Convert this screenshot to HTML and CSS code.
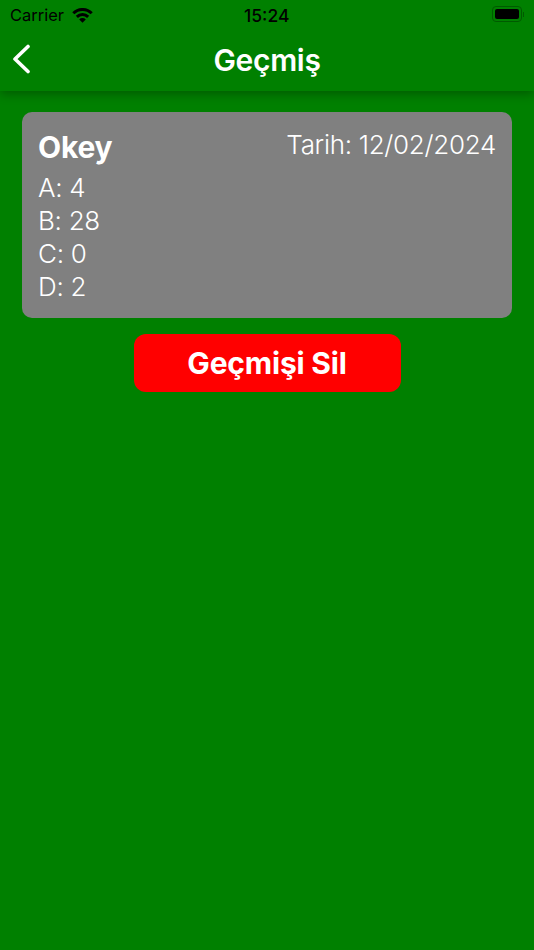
FILE: index.html
```html
<!DOCTYPE html>
<html lang="en">
<head>
    <meta charset="UTF-8">
    <meta name="viewport" content="width=device-width, initial-scale=1.0">
    <title>Geçmiş</title>
    <link rel="stylesheet" href="styles.css">
</head>
<body>
    <header class="top">
        <div class="status-bar">
            <div class="status-left">
                <span>Carrier</span>
                <svg class="wifi" width="21" height="15" viewBox="0 0 21 15">
                    <path d="M1.3 5.3A13 13 0 0 1 19.700 5.300" fill="none" stroke="#000" stroke-width="3"/>
                    <path d="M4.840 8.840A8 8 0 0 1 16.160 8.840" fill="none" stroke="#000" stroke-width="3"/>
                    <path d="M10.500 14.700L7.200 11.400A4.600 4.600 0 0 1 13.800 11.400Z"/>
                </svg>
            </div>
            <span class="clock">15:24</span>
            <div class="battery">
                <div class="battery-body"><div class="battery-level"></div></div>
                <div class="battery-cap"></div>
            </div>
        </div>
        <div class="nav-bar">
            <a class="back" href="#">
                <svg width="20" height="30" viewBox="0 0 20 30">
                    <path d="M17 2.500 L4 15 L17 27.500" fill="none" stroke="#fff" stroke-width="3.600" stroke-linecap="round" stroke-linejoin="round"/>
                </svg>
            </a>
            <h1>Geçmiş</h1>
        </div>
    </header>

    <main class="content">
        <section class="card">
            <div class="card-head">
                <h2>Okey</h2>
                <span class="date">Tarih: 12/02/2024</span>
            </div>
            <ul class="scores">
                <li>A: 4</li>
                <li>B: 28</li>
                <li>C: 0</li>
                <li>D: 2</li>
            </ul>
        </section>
        <button class="delete-btn">Geçmişi Sil</button>
    </main>
</body>
</html>
```

FILE: styles.css
```css
* {
    margin: 0;
    padding: 0;
    box-sizing: border-box;
    font-family: 'Inter', 'Liberation Sans', sans-serif;
}

body {
    width: 534px;
    height: 950px;
    overflow: hidden;
    background-color: #008000;
}

.top {
    height: 91px;
    background-color: #008000;
    box-shadow: 0 3px 10px rgba(0,0,0,0.3);
    position: relative;
}

.status-bar {
    height: 30px;
    padding: 0 10px;
    display: flex;
    align-items: center;
    justify-content: space-between;
    position: relative;
    color: #000;
}

.status-left {
    display: flex;
    align-items: center;
    gap: 8px;
    font-size: 16.500px;
}

.clock {
    position: absolute;
    left: 244px;
    top: 5px;
    font-size: 17.500px;
    font-weight: 500;
}

.battery {
    display: flex;
    align-items: center;
    gap: 1px;
    margin-top: -2px;
}

.battery-body {
    width: 30px;
    height: 16px;
    border: 1px solid #005a00;
    border-radius: 4px;
    padding: 2px;
}

.battery-level {
    height: 100%;
    background-color: #000;
    border-radius: 2px;
}

.battery-cap {
    width: 1px;
    height: 5px;
    background-color: #005a00;
}

.nav-bar {
    height: 61px;
    display: flex;
    align-items: center;
    justify-content: center;
    position: relative;
}

.back {
    position: absolute;
    left: 11px;
    top: 14px;
    display: block;
    height: 30px;
}

.nav-bar h1 {
    color: white;
    font-size: 30px;
    font-weight: 600;
    letter-spacing: -0.300px;
    margin-top: -2px;
}

.content {
    padding: 21px 22px 0;
    display: flex;
    flex-direction: column;
    align-items: center;
}

.card {
    width: 490px;
    height: 206px;
    background-color: #808080;
    border-radius: 10px;
    padding: 16px;
    color: white;
}

.card-head {
    display: flex;
    justify-content: space-between;
    align-items: flex-start;
}

.card-head h2 {
    font-size: 30px;
    font-weight: 700;
    line-height: 38px;
    letter-spacing: -0.200px;
}

.date {
    font-size: 26px;
    font-weight: 300;
    line-height: 34px;
    letter-spacing: -0.300px;
}

.scores {
    list-style: none;
    margin-top: 5px;
}

.scores li {
    font-size: 26px;
    font-weight: 300;
    line-height: 33px;
    letter-spacing: -0.300px;
}

.delete-btn {
    width: 267px;
    height: 58px;
    margin-top: 16px;
    background-color: #ff0000;
    color: white;
    border: none;
    border-radius: 12px;
    font-size: 30px;
    font-weight: 700;
    letter-spacing: -0.200px;
}
```
